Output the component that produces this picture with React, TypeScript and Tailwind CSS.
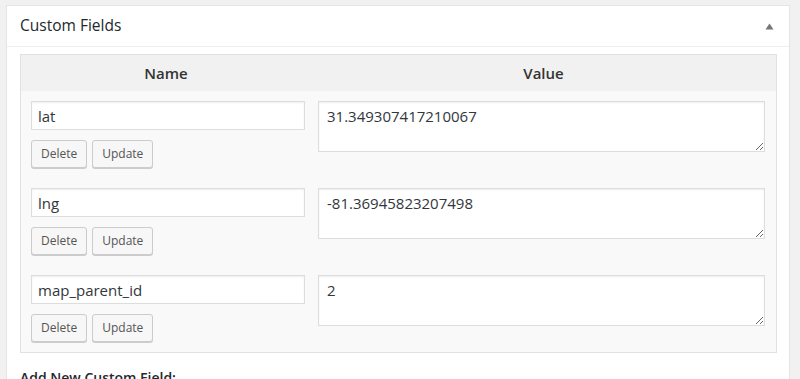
import React from "react";

const rows = [
  { name: "lat", value: "31.349307417210067" },
  { name: "lng", value: "-81.36945823207498" },
  { name: "map_parent_id", value: "2" },
];

const font = { fontFamily: '"Open Sans", "Noto Sans", sans-serif' };

const Button = ({ label }: { label: string }) => (
  <button className="h-[28px] rounded-[3px] border border-[#cccccc] bg-[#f7f7f7] px-[9px] text-[12px] leading-[26px] text-[#555555] shadow-[0_1px_0_#cccccc]">
    {label}
  </button>
);

export default function App() {
  return (
    <div
      style={font}
      className="h-[379px] overflow-hidden bg-[#f1f1f1] pl-[6px] pr-[10px] pt-[5px] text-[#23282d]"
    >
      <div className="h-[400px] border border-[#e5e5e5] bg-white shadow-[0_1px_1px_rgba(0,0,0,0.04)]">
        <div className="flex h-[41px] items-center justify-between border-b border-[#eeeeee] pl-[13px] pr-[15px]">
          <h2 className="text-[15.5px] font-medium">Custom Fields</h2>
          <svg width="9" height="7" viewBox="0 0 9 7">
            <path d="M4.5 0.5 L8.5 6.5 L0.5 6.5 Z" fill="#72777c" />
          </svg>
        </div>
        <div className="pl-[13px] pr-[12px] pt-[7px]">
          <div className="border border-[#e1e1e1] bg-[#f9f9f9]">
            <div className="grid h-[36px] grid-cols-[290px_1fr] items-center bg-[#f1f1f1] text-[15px] font-semibold text-[#333333]">
              <div className="text-center">Name</div>
              <div className="text-center">Value</div>
            </div>
            {rows.map((r) => (
              <div key={r.name} className="grid grid-cols-[290px_1fr]">
                <div className="py-[10px] pl-[10px] pr-[6px]">
                  <input
                    readOnly
                    defaultValue={r.name}
                    className="block h-[29px] w-full border border-[#dddddd] bg-white px-[6px] text-[15px] text-[#32373c] shadow-[inset_0_1px_2px_rgba(0,0,0,0.07)] outline-none"
                  />
                  <div className="mt-[10px] flex gap-[5px]">
                    <Button label="Delete" />
                    <Button label="Update" />
                  </div>
                </div>
                <div className="py-[10px] pl-[7px] pr-[11px]">
                  <textarea
                    readOnly
                    defaultValue={r.value}
                    className="block h-[51px] w-full border border-[#dddddd] bg-white px-[8px] py-[4px] text-[15px] leading-[20px] text-[#32373c] shadow-[inset_0_1px_2px_rgba(0,0,0,0.07)] outline-none"
                  />
                </div>
              </div>
            ))}
          </div>
          <p className="mt-[14px] text-[14px] font-semibold">Add New Custom Field:</p>
        </div>
      </div>
    </div>
  );
}
